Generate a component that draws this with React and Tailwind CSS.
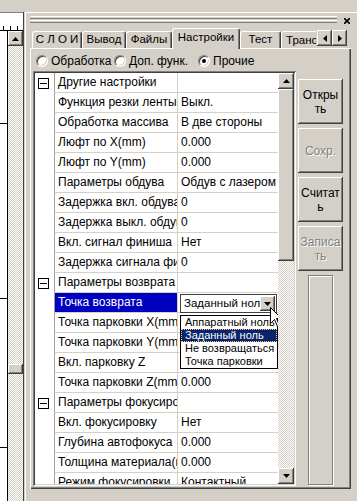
import React from "react";

const raised =
  "bg-[#d4d0c8] shadow-[inset_-1px_-1px_#404040,inset_1px_1px_#ffffff,inset_-2px_-2px_#808080,inset_2px_2px_#d4d0c8]";
const dither =
  "bg-[image:repeating-conic-gradient(#d4d0c8_0%_25%,#ffffff_0%_50%)] bg-[length:2px_2px]";

const rows = [
  { group: true, name: "Другие настройки" },
  { name: "Функция резки ленты", value: "Выкл." },
  { name: "Обработка массива", value: "В две стороны" },
  { name: "Люфт по X(mm)", value: "0.000" },
  { name: "Люфт по Y(mm)", value: "0.000" },
  { name: "Параметры обдува", value: "Обдув с лазером" },
  { name: "Задержка вкл. обдува", value: "0" },
  { name: "Задержка выкл. обдува", value: "0" },
  { name: "Вкл. сигнал финиша", value: "Нет" },
  { name: "Задержка сигнала финиша", value: "0" },
  { group: true, name: "Параметры возврата" },
  { name: "Точка возврата", selected: true },
  { name: "Точка парковки X(mm)", value: "0.000" },
  { name: "Точка парковки Y(mm)", value: "0.000" },
  { name: "Вкл. парковку Z", value: "Нет" },
  { name: "Точка парковки Z(mm)", value: "0.000" },
  { group: true, name: "Параметры фокусировки" },
  { name: "Вкл. фокусировку", value: "Нет" },
  { name: "Глубина автофокуса", value: "0.000" },
  { name: "Толщина материала(mm)", value: "0.000" },
  { name: "Режим фокусировки", value: "Контактный" },
];

const tabs = [
  { label: "С Л О И", w: "w-[50px]" },
  { label: "Вывод", w: "w-[44px]" },
  { label: "Файлы", w: "w-[46px]" },
  { label: "Настройки", w: "w-[68px]", active: true },
  { label: "Тест", w: "w-[41px]" },
];

function Arrow({ dir, disabled }) {
  const pts = {
    up: "3.5,0 7,4 0,4",
    down: "0,0 7,0 3.5,4",
    left: "4,0 4,7 0,3.5",
    right: "0,0 4,3.5 0,7",
  }[dir];
  const horiz = dir === "up" || dir === "down";
  return (
    <svg width={horiz ? 7 : 4} height={horiz ? 4 : 7} viewBox={horiz ? "0 0 7 4" : "0 0 4 7"}>
      <polygon points={pts} fill={disabled ? "#808080" : "#000"} />
    </svg>
  );
}

function Radio({ on }) {
  return (
    <span className="w-[12px] h-[12px] shrink-0 rounded-full bg-white border border-t-[#808080] border-l-[#808080] border-r-white border-b-white shadow-[inset_1px_1px_#404040,inset_-1px_-1px_#d4d0c8] flex items-center justify-center">
      {on && <span className="w-[4px] h-[4px] rounded-full bg-black" />}
    </span>
  );
}

function Cursor() {
  return (
    <svg width="13" height="21" viewBox="0 0 13 21">
      <path
        d="M0.5 0.5 L0.5 16.5 L4.5 12.5 L7.5 19.5 L9.5 18.5 L6.5 11.5 L11.5 11.5 Z"
        fill="#fff"
        stroke="#000"
        strokeWidth="1"
      />
    </svg>
  );
}

function Combo() {
  return (
    <div className="relative ml-[2px] mt-[1px] w-[97px] h-[19px] border border-[#404040] bg-white flex items-center text-[11.5px]">
      <span className="flex-1 pl-[3px] overflow-hidden whitespace-nowrap text-black">Заданный ноль</span>
      <span className={`${raised} w-[15px] h-[15px] mr-[1px] flex items-center justify-center shrink-0`}>
        <Arrow dir="down" />
      </span>
      <div className="absolute left-[-1px] top-[20px] w-[98px] border border-black bg-white z-10 text-black text-[11px]">
        <div className="h-[13px] leading-[13px] pl-[4px] whitespace-nowrap overflow-hidden">Аппаратный ноль</div>
        <div className="h-[13px] leading-[11px] pl-[3px] whitespace-nowrap overflow-hidden bg-[#0a246a] text-white border border-dotted border-[#f0d080]">
          Заданный ноль
        </div>
        <div className="h-[13px] leading-[13px] pl-[4px] whitespace-nowrap overflow-hidden">Не возвращаться</div>
        <div className="h-[13px] leading-[13px] pl-[4px] whitespace-nowrap overflow-hidden">Точка парковки</div>
      </div>
      <div className="absolute left-[89px] top-[12px] z-20">
        <Cursor />
      </div>
    </div>
  );
}

function Row({ r }) {
  return (
    <div className="flex h-[20px] shrink-0">
      <div className="w-[19px] bg-white flex items-center pl-[3px]">
        {r.group && (
          <span className="w-[11px] h-[11px] border border-black flex items-center justify-center">
            <span className="w-[7px] h-[1px] bg-black" />
          </span>
        )}
      </div>
      <div
        className={`w-[124px] border-l border-l-[#a0a0a0] border-r border-r-[#d4d0c8] border-b border-b-[#d4d0c8] pl-[3px] leading-[19px] overflow-hidden whitespace-nowrap ${
          r.selected ? "bg-[#0000c0] text-white" : "bg-white"
        }`}
      >
        {r.name}
      </div>
      <div className="w-[100px] bg-white border-b border-b-[#d4d0c8] whitespace-nowrap">
        {r.selected ? <Combo /> : <div className="pl-[3px] leading-[19px] overflow-hidden">{r.value}</div>}
      </div>
    </div>
  );
}

function Btn({ lines, disabled }) {
  return (
    <div
      className={`${raised} h-[45px] flex flex-col items-center justify-center leading-[14px] ${
        disabled ? "text-[#808080] [text-shadow:1px_1px_#ffffff]" : "text-black"
      }`}
    >
      {lines.map((l) => (
        <span key={l}>{l}</span>
      ))}
    </div>
  );
}

export default function App() {
  return (
    <div className="w-[357px] h-[501px] overflow-hidden bg-[#d4d0c8] flex text-[12px] text-black font-['Liberation_Sans',Arial,sans-serif]">
      {/* left ruler + scrollbar */}
      <div className="w-[25px] shrink-0 flex flex-col">
        <div className="h-[12px]" />
        <div className="flex">
          <div className="w-[23px] h-[19px] bg-white border-t border-t-[#808080] border-b border-b-black">
            <svg width="23" height="17" viewBox="0 0 23 17">
              <line x1="3.5" y1="13" x2="3.5" y2="17" stroke="#000" />
              <line x1="10.5" y1="13" x2="10.5" y2="17" stroke="#000" />
              <line x1="17.5" y1="13" x2="17.5" y2="17" stroke="#000" />
            </svg>
          </div>
          <div className="w-[1px] bg-[#404040]" />
        </div>
        <div className="flex flex-1">
          <div className="w-[8px] bg-white border-r border-black">
            <svg width="7" height="470" viewBox="0 0 7 470">
              <line x1="0" y1="92.5" x2="7" y2="92.5" stroke="#000" />
              <line x1="0" y1="267.5" x2="7" y2="267.5" stroke="#000" />
              <line x1="0" y1="416.5" x2="7" y2="416.5" stroke="#000" />
            </svg>
          </div>
          <div className="w-[15px] flex flex-col">
            <div className={`${raised} h-[15px] flex items-center justify-center`}>
              <Arrow dir="up" />
            </div>
            <div className={`${dither} h-[318px]`} />
            <div className={`${raised} h-[10px]`} />
            <div className={`${dither} flex-1`} />
          </div>
          <div className="w-[1px] bg-[#404040]" />
          <div className="w-[1px]" />
        </div>
      </div>

      {/* main window */}
      <div className="flex-1 mt-[12px] border-t border-l border-white flex flex-col">
        <div className="h-[15px] flex items-start pt-[3px] pl-[4px]">
          <div className="w-[307px] flex flex-col gap-[1px]">
            <div className="h-[3px] border-t border-white border-b border-b-[#808080]" />
            <div className="h-[3px] border-t border-white border-b border-b-[#808080]" />
          </div>
          <svg className="ml-[7px] mt-[2px]" width="6" height="6" viewBox="0 0 6 6">
            <path d="M0 0 L6 6 M6 0 L0 6" stroke="#000" strokeWidth="1.6" />
          </svg>
        </div>

        {/* tabs */}
        <div className="h-[20px] flex items-end pl-[6px] text-[11.5px]">
          {tabs.map((t) =>
            t.active ? (
              <div
                key={t.label}
                className={`${t.w} relative z-10 h-[21px] -mb-[1px] bg-[#d4d0c8] border-t border-l border-white border-r border-r-[#404040] shadow-[inset_-1px_0_#808080] rounded-t-[3px] flex items-center justify-center pb-[3px] whitespace-nowrap`}
              >
                {t.label}
              </div>
            ) : (
              <div
                key={t.label}
                className={`${t.w} h-[17px] border-t border-l border-white border-r border-r-[#404040] shadow-[inset_-1px_0_#808080] rounded-t-[3px] flex items-center justify-center whitespace-nowrap`}
              >
                {t.label}
              </div>
            )
          )}
          <div className="w-[35px] h-[17px] border-t border-l border-white rounded-tl-[3px] overflow-hidden whitespace-nowrap pl-[4px] leading-[16px]">
            Транспорт
          </div>
          <div className="self-start mt-[2px] ml-[1px] flex">
            <div className={`${raised} w-[15px] h-[16px] flex items-center justify-center`}>
              <Arrow dir="left" />
            </div>
            <div className={`${raised} w-[15px] h-[16px] flex items-center justify-center`}>
              <Arrow dir="right" />
            </div>
          </div>
        </div>

        {/* tab panel */}
        <div className="ml-[4px] w-[321px] h-[441px] shadow-[inset_1px_1px_#ffffff,inset_-1px_-1px_#404040,inset_-2px_-2px_#808080] pt-[2px] pl-[3px]">
          <div className="h-[21px] flex items-center pl-[3px]">
            <div className="w-[78px] flex items-center gap-[3px]">
              <Radio />
              <span>Обработка</span>
            </div>
            <div className="w-[84px] flex items-center gap-[3px]">
              <Radio />
              <span>Доп. функ.</span>
            </div>
            <div className="flex items-center gap-[3px]">
              <Radio on />
              <span>Прочие</span>
            </div>
          </div>

          <div className="flex">
            {/* property grid */}
            <div className="w-[263px] h-[415px] p-[2px] bg-white shadow-[inset_1px_1px_#808080,inset_-1px_-1px_#ffffff,inset_2px_2px_#404040,inset_-2px_-2px_#d4d0c8] flex">
              <div className="w-[243px] h-[411px] flex flex-col overflow-hidden">
                {rows.map((r) => (
                  <Row key={r.name} r={r} />
                ))}
              </div>
              <div className="w-[16px] flex flex-col">
                <div className={`${raised} h-[16px] flex items-center justify-center`}>
                  <Arrow dir="up" />
                </div>
                <div className={`${raised} h-[172px]`} />
                <div className={`${dither} flex-1`} />
                <div className={`${raised} h-[16px] flex items-center justify-center`}>
                  <Arrow dir="down" />
                </div>
              </div>
            </div>

            {/* buttons */}
            <div className="ml-[2px] mt-[8px] w-[45px] flex flex-col gap-[4px]">
              <Btn lines={["Откры", "ть"]} />
              <Btn lines={["Сохр."]} disabled />
              <Btn lines={["Считат", "ь"]} />
              <Btn lines={["Записа", "ть"]} disabled />
              <div className="mx-auto w-[25px] h-[210px] border border-[#808080] shadow-[inset_1px_1px_#ffffff,1px_1px_#ffffff]" />
            </div>
          </div>
        </div>
      </div>
    </div>
  );
}
